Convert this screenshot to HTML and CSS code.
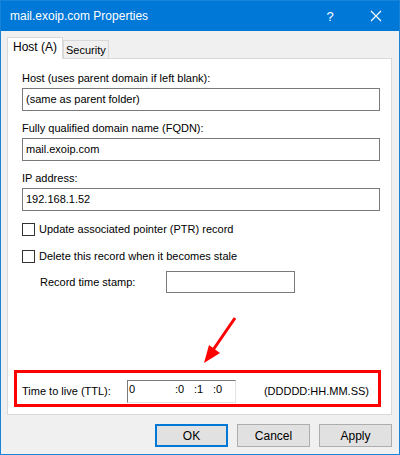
FILE: index.html
```html
<!DOCTYPE html>
<html lang="en">
<head>
  <meta charset="UTF-8">
  <meta name="viewport" content="width=device-width, initial-scale=1.0">
  <title>mail.exoip.com Properties</title>
  <link rel="stylesheet" href="styles.css">
</head>
<body>

  <div class="window">
    <div class="titlebar">
      <span class="title">mail.exoip.com Properties</span>
      <span class="title-btn help">?</span>
      <span class="title-btn close">
        <svg width="12" height="12" viewBox="0 0 12 12">
          <path d="M1 1 L11 11 M11 1 L1 11" stroke="#fff" stroke-width="1.2" fill="none" />
        </svg>
      </span>
    </div>

    <div class="tabs">
      <div class="tab active">Host (A)</div>
      <div class="tab">Security</div>
    </div>

    <div class="panel">
      <div class="field">
        <label class="label">Host (uses parent domain if left blank):</label>
        <div class="textbox">(same as parent folder)</div>
      </div>

      <div class="field">
        <label class="label">Fully qualified domain name (FQDN):</label>
        <div class="textbox">mail.exoip.com</div>
      </div>

      <div class="field">
        <label class="label">IP address:</label>
        <div class="textbox">192.168.1.52</div>
      </div>

      <div class="check-row first">
        <span class="checkbox"></span>
        <span class="check-label">Update associated pointer (PTR) record</span>
      </div>

      <div class="check-row">
        <span class="checkbox"></span>
        <span class="check-label">Delete this record when it becomes stale</span>
      </div>

      <div class="stamp-row">
        <span class="stamp-label">Record time stamp:</span>
        <div class="textbox stamp-box"></div>
      </div>

      <div class="ttl-box">
        <span class="ttl-label">Time to live (TTL):</span>
        <div class="ttl-input">
          <span class="ttl-days">0</span>
          <span class="ttl-part">:0</span>
          <span class="ttl-part">:1</span>
          <span class="ttl-part">:0</span>
        </div>
        <span class="ttl-format">(DDDDD:HH.MM.SS)</span>
      </div>
    </div>

    <div class="buttons">
      <button class="btn default">OK</button>
      <button class="btn">Cancel</button>
      <button class="btn">Apply</button>
    </div>

    <svg class="arrow" width="40" height="52" viewBox="0 0 40 52">
      <path d="M34 3 L12 35" stroke="#ff0000" stroke-width="3" fill="none" />
      <polygon points="3,48 8,30 19,38" fill="#ff0000" />
    </svg>
  </div>

</body>
</html>
```

FILE: styles.css
```css
body {
  margin: 0;
  font-family: "Liberation Sans", Arial, sans-serif;
  font-size: 11px;
  color: #000;
  background-color: #f0f0f0;
}

.window {
  position: relative;
  width: 400px;
  height: 455px;
  box-sizing: border-box;
  border: 1px solid #1883d7;
  background-color: #f0f0f0;
  display: flex;
  flex-direction: column;
}

.titlebar {
  height: 30px;
  background-color: #0078d7;
  color: white;
  display: flex;
  align-items: center;
  padding-left: 9px;
}

.title {
  font-size: 12px;
  flex: 1;
}

.title-btn {
  width: 46px;
  text-align: center;
  font-size: 13px;
}

.close {
  display: flex;
  justify-content: center;
  align-items: center;
}

.tabs {
  display: flex;
  align-items: flex-end;
  margin-top: 6px;
  padding-left: 6px;
  height: 21px;
}

.tab {
  height: 18px;
  line-height: 18px;
  padding: 0 2px;
  border: 1px solid #d9d9d9;
  border-bottom: none;
  background-color: #f0f0f0;
  box-sizing: border-box;
  font-size: 11px;
}

.tab.active {
  line-height: 19px;
  padding: 0 5px;
  background-color: white;
  position: relative;
  z-index: 1;
  margin-bottom: -1px;
  height: 22px;
  font-size: 12px;
}

.panel {
  margin: 0 7px 0 6px;
  height: 357px;
  box-sizing: border-box;
  background-color: white;
  border: 1px solid #d9d9d9;
  padding: 11px 11px 7px 14px;
  display: flex;
  flex-direction: column;
}

.field {
  display: flex;
  flex-direction: column;
  margin-bottom: 9px;
}

.label {
  height: 16px;
  line-height: 16px;
  margin-bottom: 2px;
}

.textbox {
  height: 23px;
  box-sizing: border-box;
  border: 1px solid #7a7a7a;
  background-color: white;
  padding-left: 3px;
  line-height: 21px;
}

.check-row {
  display: flex;
  align-items: center;
  height: 16px;
  margin-top: 11px;
}

.check-row.first {
  margin-top: 1px;
}

.checkbox {
  width: 13px;
  height: 13px;
  box-sizing: border-box;
  border: 1px solid #333;
  margin-right: 4px;
}

.stamp-row {
  display: flex;
  align-items: center;
  margin-top: 7px;
  padding-left: 18px;
}

.stamp-label {
  width: 126px;
}

.stamp-box {
  width: 129px;
  height: 22px;
}

.ttl-box {
  margin-top: auto;
  margin-left: -8px;
  margin-right: -1px;
  height: 37px;
  box-sizing: border-box;
  border: 3px solid #ff0000;
  display: flex;
  align-items: flex-start;
  padding: 7px 9px 0 5px;
}

.ttl-label {
  width: 105px;
  line-height: 23px;
}

.ttl-input {
  width: 109px;
  height: 23px;
  box-sizing: border-box;
  border: 1px solid #7a7a7a;
  border-right-color: #e3e3e3;
  border-bottom-color: #e3e3e3;
  display: flex;
  line-height: 16px;
  padding-left: 1px;
}

.ttl-days {
  width: 46px;
}

.ttl-part {
  width: 19px;
}

.ttl-format {
  margin-left: auto;
  line-height: 23px;
}

.buttons {
  display: flex;
  justify-content: flex-end;
  gap: 9px;
  margin-top: 9px;
  padding-right: 7px;
}

.btn {
  width: 73px;
  height: 23px;
  background-color: #e1e1e1;
  border: 1px solid #adadad;
  font-family: "Liberation Sans", Arial, sans-serif;
  font-size: 12px;
  color: #000;
  padding: 0;
}

.btn.default {
  border: 2px solid #0078d7;
}

.arrow {
  position: absolute;
  left: 200px;
  top: 314px;
}
```
